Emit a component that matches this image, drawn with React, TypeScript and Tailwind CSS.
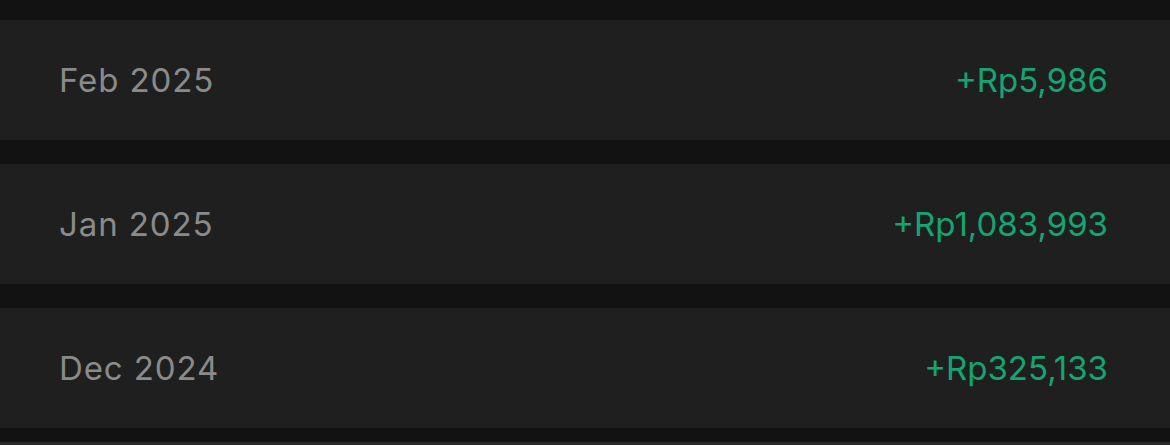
import React from "react";

const rows = [
  { month: "Feb 2025", amount: "+Rp5,986" },
  { month: "Jan 2025", amount: "+Rp1,083,993" },
  { month: "Dec 2024", amount: "+Rp325,133" },
];

export default function App() {
  return (
    <div
      className="w-[1170px] h-[445px] overflow-hidden bg-[#121212] pt-[20px] flex flex-col gap-[24px]"
      style={{ fontFamily: "Inter, 'Noto Sans', sans-serif" }}
    >
      {rows.map((r) => (
        <div
          key={r.month}
          className="h-[120px] shrink-0 bg-[#1f1f1f] flex items-center justify-between pl-[59px] pr-[62px]"
        >
          <span className="text-[33px] tracking-[0.9px] text-[#8a8a8a] leading-none">{r.month}</span>
          <span className="text-[33px] tracking-[0px] text-[#14a572] leading-none">{r.amount}</span>
        </div>
      ))}
      <div className="h-[120px] shrink-0 bg-[#2a2a2a] -mt-[10px]" />
    </div>
  );
}
